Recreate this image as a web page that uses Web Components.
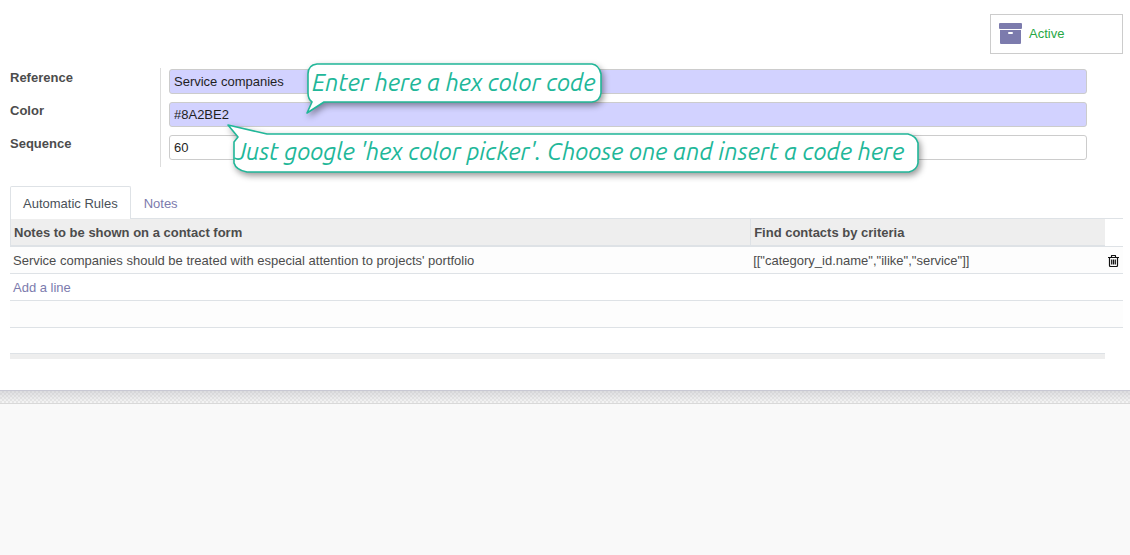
<!DOCTYPE html>
<html lang="en">
<head>
<meta charset="utf-8">
<title>Automatic Rules</title>
<style>
html { min-height: 100%; background: #f9f9f9; }
body { margin: 0; font: 13px/20px "Liberation Sans", Arial, sans-serif; color: #4c4c4c; }
</style>
</head>
<body>
<form-sheet>
  <status-button slot="actions">Active</status-button>
  <field-group>
    <form-field label="Reference" value="Service companies" required>
      <hint-bubble class="below" width="296" height="51" outline="M11 1H286Q293 2 295 11V30Q294 38 286 39H18L1 50L6 39Q2 36 2 30V11Q2 2 11 1Z">Enter here a hex color code</hint-bubble>
    </form-field>
    <form-field label="Color" value="#8A2BE2" required>
      <hint-bubble class="above" width="694" height="50" outline="M1 1L40 10H681Q689 12 691 19V39Q690 46 682 48H20Q9 46 7 39V18L11 13Z">Just google 'hex color picker'. Choose one and insert a code here</hint-bubble>
    </form-field>
    <form-field label="Sequence" value="60"></form-field>
  </field-group>
  <tab-bar></tab-bar>
  <rules-table></rules-table>
</form-sheet>

<script>
function define(name, html, setup) {
  const template = document.createElement('template');
  template.innerHTML = '<style>*{box-sizing:border-box}</style>' + html;
  customElements.define(name, class extends HTMLElement {
    constructor() {
      super();
      this.attachShadow({ mode: 'open' }).append(template.content.cloneNode(true));
    }
    connectedCallback() { if (setup) setup(this, this.shadowRoot); }
  });
}

define('form-sheet', `
<style>
:host { display: block; }
main { background: #fff; padding: 14px 7px 31px 10px; }
header { display: flex; justify-content: flex-end; margin-bottom: 14px; }
.edge { height: 14px; border-top: 1px solid #c8c8d3; border-bottom: 1px solid #d9d9d9;
  background: linear-gradient(#d0d0d4a0, #fafafa60), repeating-conic-gradient(#dcdcdc 0 25%, #f2f2f2 0 50%) 0 0 / 4px 4px; }
</style>
<main><header><slot name="actions"></slot></header><slot></slot></main>
<div class="edge"></div>`);

define('status-button', `
<style>
:host { display: block; }
button { display: flex; align-items: center; gap: 7px; width: 133px; height: 40px; padding: 0 8px;
  font: inherit; color: #28a745; background: #fff; border: 1px solid #ccc; border-radius: 0; }
svg { display: block; }
</style>
<button type="button">
<svg width="23" height="22" viewBox="0 0 23 22" fill="#7c7bad" aria-hidden="true"><path d="M1 0h21q1 0 1 1v4q0 1-1 1H1q-1 0-1-1V1q0-1 1-1Z"/><path fill-rule="evenodd" d="M1 7h21v13q0 1-1 1H2q-1 0-1-1Zm9 2q-1 0-1 1t1 1h3q1 0 1-1t-1-1Z"/></svg>
<slot></slot></button>`);

define('field-group', `
<style>:host { display: block; margin-bottom: 19px; }</style><slot></slot>`);

define('form-field', `
<style>
:host { display: grid; grid-template-columns: 150px 1fr; height: 33px; padding-right: 36px; }
label { font-weight: bold; }
.cell { position: relative; border-left: 1px solid #ddd; padding: 1px 0 7px 8px; }
input { display: block; width: 100%; height: 25px; padding: 0 4px; font: inherit; color: #1f1f1f;
  background: #fff; border: 1px solid #ccc; border-radius: 3px; outline: 0; }
:host([required]) input { background: #d2d2ff; }
</style>
<label for="f"></label><div class="cell"><input id="f"><slot></slot></div>`, (el, root) => {
  root.querySelector('label').textContent = el.getAttribute('label');
  root.querySelector('input').value = el.getAttribute('value');
});

define('hint-bubble', `
<style>
:host { position: absolute; z-index: 2; font: italic 24px/38px Ubuntu, "Noto Sans", sans-serif; color: #21b799; white-space: nowrap; }
:host(.below) { left: 145px; top: -5px; padding: 1px 6px; }
:host(.above) { left: 66px; top: 23px; padding: 9px 8px; }
svg { position: absolute; left: 0; top: 0; z-index: -1; overflow: visible; filter: drop-shadow(2px 3px 3px #0006); }
path { fill: #fff; stroke: #21b799; stroke-width: 1.6; stroke-linejoin: round; }
</style>
<svg aria-hidden="true"><path/></svg><slot></slot>`, (el, root) => {
  const svg = root.querySelector('svg');
  svg.setAttribute('width', el.getAttribute('width'));
  svg.setAttribute('height', el.getAttribute('height'));
  root.querySelector('path').setAttribute('d', el.getAttribute('outline'));
});

define('tab-bar', `
<style>
:host { display: block; }
nav { display: flex; border-bottom: 1px solid #dee2e6; }
a { padding: 7px 12px 5px; height: 32px; border: 1px solid transparent; border-bottom: 0; color: #7c7bad; text-decoration: none; }
a[aria-current] { color: #495057; background: #fff; border-color: #dee2e6; height: 33px; margin-bottom: -1px; border-radius: 2px 2px 0 0; }
</style>
<nav><a href="#rules" aria-current="page">Automatic Rules</a><a href="#notes">Notes</a></nav>`);

define('rules-table', `
<style>
:host { display: block; }
table { width: 100%; border-collapse: separate; border-spacing: 0; table-layout: fixed; }
.wide { width: 66.5%; } .tool { width: 18px; }
th, td { padding: 0 3px; text-align: left; }
th { height: 28px; padding-top: 2px; background: #eee; border-bottom: 2px solid #dee2e6; border-left: 1px solid #dee2e6; }
thead td { border-bottom: 1px solid #dee2e6; }
tbody td { height: 27px; padding-top: 2px; border-bottom: 1px solid #dee2e6; }
tbody tr:nth-child(odd) { background: #fdfdfd; }
tbody tr:last-child td { height: 25px; border: 0; background: #fff; }
tfoot td { height: 6px; padding: 0; }
tfoot td:first-child { background: #eee; border-top: 1px solid #dee2e6; }
a { color: #7c7bad; text-decoration: none; }
button { display: block; padding: 0; border: 0; background: none; color: #111; }
svg { display: block; }
</style>
<table>
<colgroup><col class="wide"><col><col class="tool"></colgroup>
<thead><tr><th>Notes to be shown on a contact form</th><th>Find contacts by criteria</th><td></td></tr></thead>
<tbody>
<tr><td>Service companies should be treated with especial attention to projects' portfolio</td><td>[["category_id.name","ilike","service"]]</td>
<td><button type="button" aria-label="Delete row"><svg width="11" height="12" viewBox="0 0 11 12" fill="none" stroke="currentColor" stroke-width="1.2"><path d="M0 2.5h11M3.5 2V1q0-.5.5-.5h3q.5 0 .5.5v1M1.5 3v7.5q0 1 1 1h6q1 0 1-1V3M3.7 4.5v5M5.5 4.5v5M7.3 4.5v5"/></svg></button></td></tr>
<tr><td colspan="3"><a href="#add">Add a line</a></td></tr>
<tr><td colspan="3"></td></tr>
<tr><td colspan="3"></td></tr>
</tbody>
<tfoot><tr><td colspan="2"></td><td></td></tr></tfoot>
</table>`);
</script>
</body>
</html>
